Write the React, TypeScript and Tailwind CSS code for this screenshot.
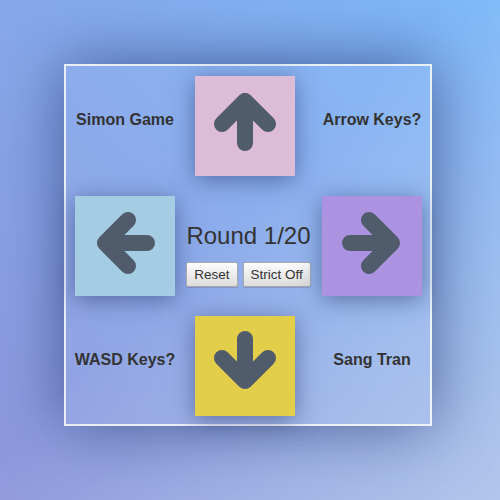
const font = { fontFamily: '"Liberation Sans", Arial, sans-serif' };

type Dir = "up" | "down" | "left" | "right";

// stroke paths in a 100x100 tile, drawn with round caps/joins
const arrowPaths: Record<Dir, string> = {
  up: "M50 67V25M27 48L50 25L73 48",
  down: "M50 23V65M27 42L50 65L73 42",
  left: "M72 47H30M53 24L30 47L53 70",
  right: "M28 47H70M47 24L70 47L47 70",
};

const Pad = ({ dir, color }: { dir: Dir; color: string }) => (
  <div className={`w-[100px] h-[100px] shadow-[0_4px_22px_rgba(30,45,95,0.5)] ${color}`}>
    <svg width="100" height="100" viewBox="0 0 100 100" fill="none">
      <path
        d={arrowPaths[dir]}
        stroke="#505b6b"
        strokeWidth="16"
        strokeLinecap="round"
        strokeLinejoin="round"
      />
    </svg>
  </div>
);

const Label = ({ children }: { children: string }) => (
  <div className="flex items-center justify-center pb-[12px] whitespace-nowrap text-[16px] font-bold text-[#333]">
    {children}
  </div>
);

const Btn = ({ children }: { children: string }) => (
  <button className="h-[25px] px-[7px] text-[13.5px] leading-none text-[#333] border border-[#a9a9a9] rounded-[2px] bg-[linear-gradient(#fdfdfd,#dcdcdc)] shadow-[0_1px_1px_rgba(0,0,0,0.15)]">
    {children}
  </button>
);

export default function App() {
  return (
    <div
      style={font}
      className="w-[500px] h-[500px] pt-[64px] pl-[64px] bg-[linear-gradient(135deg,transparent_45%,rgba(215,222,236,0.55)),linear-gradient(45deg,#8e97db,#7eb9fa)]"
    >
      <div className="w-[368px] h-[362px] border-2 border-white/80 bg-white/5 shadow-[0_0_60px_rgba(25,40,95,0.6)] pt-[10px] px-[9px]">
        <div className="grid grid-cols-[100px_147px_100px] grid-rows-[100px_100px_100px] gap-y-[20px]">
          <Label>Simon Game</Label>
          <div className="pl-[20px]">
            <Pad dir="up" color="bg-[#dcbcd6]" />
          </div>
          <Label>Arrow Keys?</Label>

          <Pad dir="left" color="bg-[#a4cde4]" />
          <div className="flex flex-col items-center pt-[26px]">
            <div className="text-[24px] leading-[28px] text-[#333]">Round 1/20</div>
            <div className="flex gap-[5px] mt-[12px]">
              <Btn>Reset</Btn>
              <Btn>Strict Off</Btn>
            </div>
          </div>
          <Pad dir="right" color="bg-[#ab93e1]" />

          <Label>WASD Keys?</Label>
          <div className="pl-[20px]">
            <Pad dir="down" color="bg-[#e2ce48]" />
          </div>
          <Label>Sang Tran</Label>
        </div>
      </div>
    </div>
  );
}
